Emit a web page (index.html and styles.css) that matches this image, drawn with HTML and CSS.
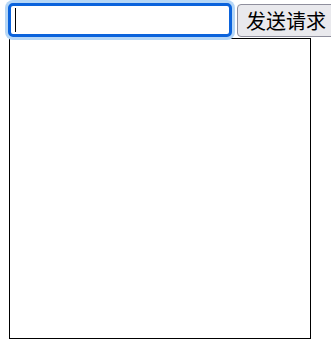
FILE: index.html
```html
<!DOCTYPE html>
<html lang="zh-CN">
<head>
    <meta charset="UTF-8">
    <title>发送请求</title>
    <link rel="stylesheet" href="styles.css">
</head>
<body>
    <div class="toolbar">
        <span class="input-wrap">
            <input type="text" class="url-input" id="urlInput" autofocus>
            <span class="caret"></span>
        </span>
        <button class="send-btn" id="sendBtn">发送请求</button>
    </div>
    <div class="result-box" id="result"></div>
</body>
</html>
```
FILE: styles.css
```css
body {
    margin: 0;
    padding: 3px 0 0 8px;
    font-family: "Liberation Sans", "Noto Sans CJK SC", sans-serif;
    overflow: hidden;
}

.toolbar {
    display: flex;
    align-items: center;
    gap: 5px;
    white-space: nowrap;
    height: 34px;
}

.input-wrap {
    position: relative;
    display: block;
    flex-shrink: 0;
}

.url-input {
    display: block;
    box-sizing: border-box;
    width: 224px;
    height: 34px;
    padding: 0 5px;
    font-size: 20px;
    border: 3px solid #0b63dc;
    border-radius: 5px;
    box-shadow: 0 0 0 3px #b5d6f6;
    outline: none;
    caret-color: #000;
}

.caret {
    position: absolute;
    left: 7px;
    top: 5px;
    width: 1px;
    height: 24px;
    background-color: #000;
}

.send-btn {
    box-sizing: border-box;
    height: 33px;
    padding: 0 8px;
    font-size: 20px;
    font-family: "Noto Sans CJK SC", sans-serif;
    color: #000;
    background-color: #e9e9ed;
    border: 1px solid #8f8f9d;
    border-radius: 4px;
    flex-shrink: 0;
}

.result-box {
    width: 300px;
    height: 299px;
    margin: 1px 0 0 1px;
    border: 1px solid #000;
}
```
